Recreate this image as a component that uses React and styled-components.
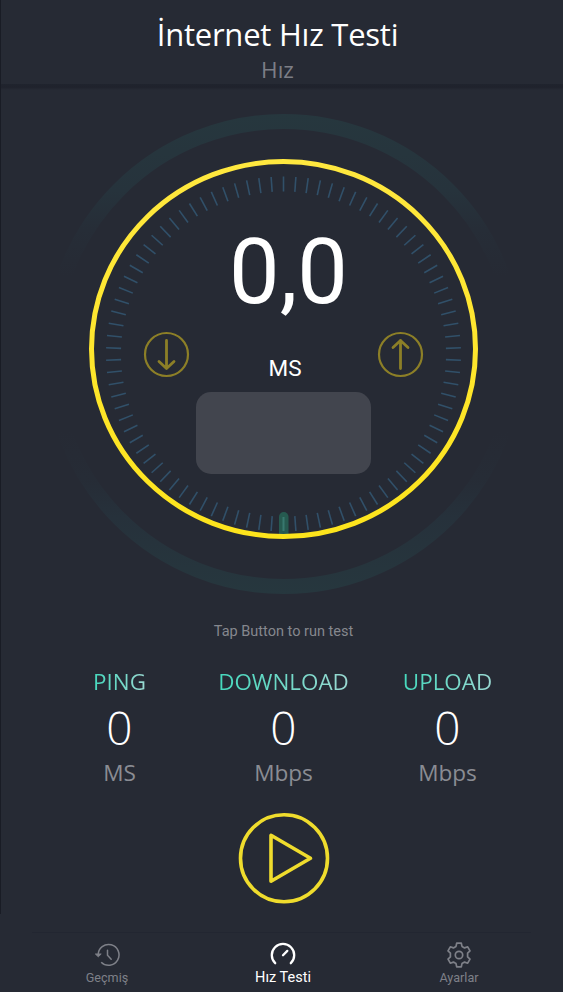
import React from 'react';
import styled, { createGlobalStyle } from 'styled-components';

const GlobalStyle = createGlobalStyle`
  * {
    box-sizing: border-box;
  }

  body {
    margin: 0;
    background-color: #262a34;
  }
`;

const Screen = styled.div`
  position: relative;
  display: flex;
  flex-direction: column;
  width: 563px;
  height: 992px;
  overflow: hidden;
  background-color: #262a34;
  font-family: 'Open Sans', sans-serif;
`;

const EdgeLine = styled.div`
  position: absolute;
  top: 0;
  left: 0;
  width: 1px;
  height: 914px;
  background-color: #191c25;
`;

const Header = styled.header`
  display: flex;
  flex-direction: column;
  align-items: center;
  height: 84px;
  padding-top: 13px;
  padding-right: 8px;
`;

const Title = styled.h1`
  margin: 0;
  font-size: 31px;
  font-weight: 400;
  line-height: 42px;
  letter-spacing: -0.23px;
  color: #ffffff;
`;

const Subtitle = styled.div`
  font-size: 22.5px;
  font-weight: 400;
  line-height: 29px;
  color: #7c7e86;
`;

const HeaderShadow = styled.div`
  height: 6px;
  background: linear-gradient(#20242e, #1f222c 50%, #262a34);
`;

const GaugeArea = styled.section`
  position: relative;
  height: 520px;
`;

const GaugeDrawing = styled.svg`
  display: block;
`;

const GaugeContent = styled.div`
  position: absolute;
  inset: 0;
  display: flex;
  flex-direction: column;
  align-items: center;
  padding-left: 7px;
`;

const Speed = styled.div`
  margin-top: 129px;
  padding-left: 7px;
  font-family: Roboto, sans-serif;
  font-size: 90px;
  line-height: 108px;
  color: #ffffff;
`;

const SpeedUnit = styled.div`
  margin-top: 27px;
  font-family: Roboto, sans-serif;
  font-size: 22.5px;
  line-height: 28px;
  color: #ffffff;
`;

const Panel = styled.div`
  width: 175px;
  height: 82px;
  margin-top: 10px;
  margin-right: 3px;
  border-radius: 15px;
  background-color: #42454e;
`;

const Hint = styled.p`
  margin: 13px 0 0 4px;
  font-family: Roboto, sans-serif;
  font-size: 14.5px;
  line-height: 18px;
  text-align: center;
  color: #85878e;
`;

const Results = styled.section`
  display: grid;
  grid-template-columns: repeat(3, 164px);
  justify-content: center;
  height: 159px;
  margin-top: 26px;
  margin-left: 4px;
`;

const Result = styled.div`
  display: flex;
  flex-direction: column;
  align-items: center;
`;

const ResultLabel = styled.div`
  font-size: 22.4px;
  line-height: 30px;
  color: transparent;
  background: linear-gradient(90deg, #45d9bd, #9ad9d2);
  background-clip: text;
`;

const ResultValue = styled.div`
  font-size: 46px;
  font-weight: 300;
  line-height: 61px;
  color: #ffffff;
`;

const ResultUnit = styled.div`
  font-size: 22.6px;
  line-height: 30px;
  color: #8a8c93;
`;

const PlayButton = styled.button`
  align-self: center;
  width: 92px;
  height: 92px;
  margin: -14px 0 0 4px;
  padding: 0;
  border: none;
  background: none;
`;

const NavDivider = styled.div`
  height: 1px;
  margin: 28px 32px 0 32px;
  background-color: #222631;
`;

const Nav = styled.nav`
  display: grid;
  grid-template-columns: repeat(3, 176px);
  height: 59px;
  margin: auto 0 0 19px;
`;

const NavItem = styled.div`
  display: flex;
  flex-direction: column;
  align-items: center;
  gap: 1px;
  padding-top: 9px;
  font-family: Roboto, sans-serif;
  font-size: ${(props) => (props.$active ? '14.5px' : '12.6px')};
  line-height: 18px;
  color: ${(props) => (props.$active ? '#ffffff' : '#7e8088')};

  svg {
    display: block;
  }
`;

const CX = 283.5;
const CY = 264;
const ticks = Array.from({ length: 90 }, (_, i) => i * 4);

function ArrowBadge({ x, up }) {
  return (
    <g transform={`translate(${x} 264.5)`} fill="none" stroke="#8c7f27" strokeWidth="2.2">
      <circle r="21.5" />
      <path
        d="M0 -14V14M-7.5 7L0 14L7.5 7"
        transform={up ? 'scale(1 -1)' : undefined}
        strokeWidth="2.8"
        strokeLinecap="round"
        strokeLinejoin="round"
      />
    </g>
  );
}

function Gauge() {
  return (
    <GaugeDrawing width="563" height="520" viewBox="0 0 563 520">
      <defs>
        <linearGradient id="halo" gradientUnits="userSpaceOnUse" x1="0" y1="24" x2="0" y2="504">
          <stop offset="0" stopColor="#26373e" />
          <stop offset="0.16" stopColor="#26333c" />
          <stop offset="0.24" stopColor="#262d37" />
          <stop offset="0.34" stopColor="#262a34" />
          <stop offset="0.66" stopColor="#262a34" />
          <stop offset="0.76" stopColor="#262c36" />
          <stop offset="0.84" stopColor="#26313b" />
          <stop offset="1" stopColor="#26373e" />
        </linearGradient>
        <linearGradient id="ring" x1="0" y1="0" x2="0" y2="1">
          <stop offset="0" stopColor="#ffe83f" />
          <stop offset="1" stopColor="#fde41c" />
        </linearGradient>
      </defs>
      <circle cx={CX} cy={CY} r="232.5" fill="none" stroke="url(#halo)" strokeWidth="15" />
      {ticks.map((angle) => (
        <line
          key={angle}
          x1={CX}
          x2={CX}
          y1={CY - 177.5}
          y2={CY - 162.5}
          stroke="#315069"
          strokeWidth="1.6"
          transform={`rotate(${angle} ${CX} ${CY})`}
        />
      ))}
      <rect x="279" y="422" width="9.5" height="26" rx="4.7" fill="#265a50" />
      <path d="M283.5 427V441" stroke="#38786f" strokeWidth="2" />
      <ellipse cx={CX} cy="259" rx="192" ry="187.5" fill="none" stroke="url(#ring)" strokeWidth="5" />
      <ArrowBadge x={166.5} />
      <ArrowBadge x={400.5} up />
    </GaugeDrawing>
  );
}

function HistoryIcon() {
  return (
    <svg width="26" height="26" viewBox="0 0 26 26" fill="none" stroke="#7e8088" strokeWidth="1.5">
      <path d="M4.2 13A10.4 10.4 0 1 1 7.2 20.2" />
      <path d="M13.5 8.3V13.3L17.2 17.2" strokeLinecap="round" />
      <path d="M1.4 12H7.2L4.3 14.8Z" fill="#7e8088" strokeWidth="1" />
    </svg>
  );
}

function SpeedIcon() {
  return (
    <svg width="26" height="26" viewBox="0 0 26 26" fill="none" stroke="#ffffff" strokeWidth="2.3">
      <path d="M5.2 21.2A11.2 11.2 0 1 1 20.8 21.2" strokeLinecap="round" />
      <path d="M13 13.2L17.3 8.9" strokeLinecap="round" />
    </svg>
  );
}

function GearIcon() {
  return (
    <svg width="26" height="26" viewBox="0 0 26 26" fill="none" stroke="#7e8088" strokeWidth="1.7" strokeLinejoin="round">
      <circle cx="13" cy="13" r="3.7" />
      <path d="M10.7 1.2H15.3L16 4.4L18.6 5.9L21.7 4.8L24 8.8L21.6 11.1V14.9L24 17.2L21.7 21.2L18.6 20.1L16 21.6L15.3 24.8H10.7L10 21.6L7.4 20.1L4.3 21.2L2 17.2L4.4 14.9V11.1L2 8.8L4.3 4.8L7.4 5.9L10 4.4Z" />
    </svg>
  );
}

const results = [
  { label: 'PING', value: '0', unit: 'MS' },
  { label: 'DOWNLOAD', value: '0', unit: 'Mbps' },
  { label: 'UPLOAD', value: '0', unit: 'Mbps' },
];

function App() {
  return (
    <Screen>
      <GlobalStyle />
      <Header>
        <Title>İnternet Hız Testi</Title>
        <Subtitle>Hız</Subtitle>
      </Header>
      <HeaderShadow />
      <GaugeArea>
        <Gauge />
        <GaugeContent>
          <Speed>0,0</Speed>
          <SpeedUnit>MS</SpeedUnit>
          <Panel />
        </GaugeContent>
      </GaugeArea>
      <Hint>Tap Button to run test</Hint>
      <Results>
        {results.map((result) => (
          <Result key={result.label}>
            <ResultLabel>{result.label}</ResultLabel>
            <ResultValue>{result.value}</ResultValue>
            <ResultUnit>{result.unit}</ResultUnit>
          </Result>
        ))}
      </Results>
      <PlayButton aria-label="Start">
        <svg width="92" height="92" viewBox="0 0 92 92" fill="none" stroke="#efdc2d">
          <circle cx="46" cy="46.3" r="43.5" strokeWidth="3.6" />
          <path d="M33 23.3V69.3L72.5 46.3Z" strokeWidth="3.6" strokeLinejoin="round" />
        </svg>
      </PlayButton>
      <NavDivider />
      <Nav>
        <NavItem>
          <HistoryIcon />
          Geçmiş
        </NavItem>
        <NavItem $active>
          <SpeedIcon />
          Hız Testi
        </NavItem>
        <NavItem>
          <GearIcon />
          Ayarlar
        </NavItem>
      </Nav>
      <EdgeLine />
    </Screen>
  );
}

export default App;
